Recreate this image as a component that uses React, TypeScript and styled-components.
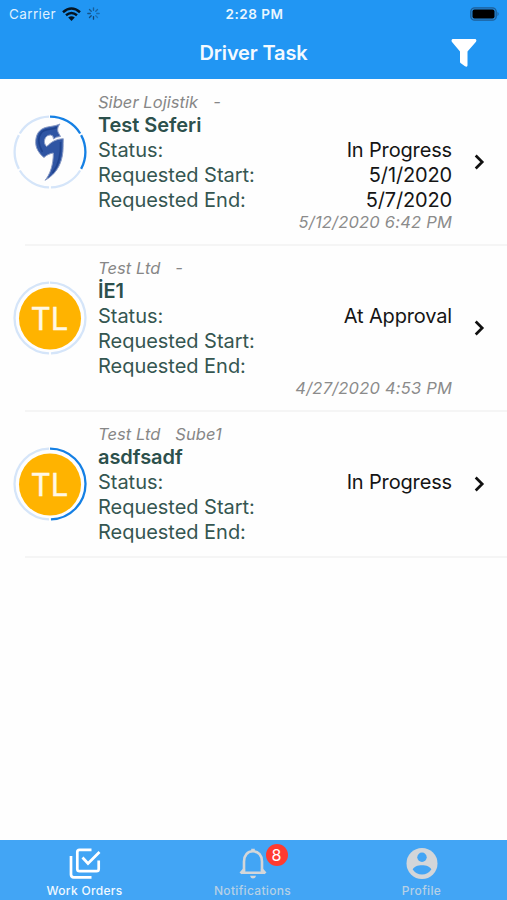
import React from "react";
import styled, { createGlobalStyle } from "styled-components";

const GlobalStyle = createGlobalStyle`
  * { box-sizing: border-box; }
  body { margin: 0; background: #fff; font-family: Inter, "Liberation Sans", sans-serif; }
`;

const Screen = styled.div`
  width: 507px;
  height: 900px;
  display: flex;
  flex-direction: column;
  overflow: hidden;
  background: #fefefe;
`;

const Header = styled.header`
  height: 79px;
  flex: none;
  background: #2196f3;
  color: #fff;
`;

const StatusBar = styled.div`
  height: 27px;
  padding: 0 7px 0 9px;
  display: grid;
  grid-template-columns: 1fr auto 1fr;
  align-items: center;
  font-size: 13.5px;
`;

const Carrier = styled.div`
  display: flex;
  align-items: center;
  gap: 6px;
  letter-spacing: 0.38px;
  color: #dff0ff;
`;

const Clock = styled.div`
  font-weight: 600;
  letter-spacing: 0.5px;
  font-size: 13.5px;
  color: #eaf6ff;
`;

const Battery = styled.svg`
  justify-self: end;
`;

const NavBar = styled.div`
  height: 52px;
  display: grid;
  grid-template-columns: 1fr auto 1fr;
  align-items: center;
  padding: 0 30px;
`;

const NavTitle = styled.h1`
  grid-column: 2;
  margin: 0;
  font-size: 20px;
  line-height: 51px;
  font-weight: 600;
  letter-spacing: -0.15px;
  color: #f4faff;
`;

const FilterIcon = styled.svg`
  justify-self: end;
`;

const List = styled.main`
  flex: 1;
`;

const Row = styled.article`
  position: relative;
  display: flex;
  padding: 13px 20px 13px 13px;

  &::after {
    content: "";
    position: absolute;
    left: 25px;
    right: 0;
    bottom: -1px;
    height: 2px;
    background: #f5f5f5;
  }
`;

const Avatar = styled.svg`
  flex: none;
  margin: 23px 11px 0 0;
`;

const Details = styled.div`
  width: 354px;
`;

const Company = styled.div`
  display: flex;
  gap: 15px;
  height: 21px;
  line-height: 20px;
  font-size: 16.5px;
  font-style: italic;
  color: #878787;
  letter-spacing: 0.05px;
`;

const TaskName = styled.h2`
  margin: 0;
  font-size: 20px;
  line-height: 25px;
  font-weight: 600;
  color: #2c504c;
  letter-spacing: -0.05px;
`;

const Field = styled.div`
  display: flex;
  justify-content: space-between;
  line-height: 25px;
  font-size: 20px;
`;

const Label = styled.span`
  color: #355651;
  letter-spacing: -0.03px;
`;

const Value = styled.span`
  color: #151515;
  letter-spacing: -0.15px;
`;

const Stamp = styled.div`
  height: 19px;
  line-height: 18px;
  font-size: 16.5px;
  letter-spacing: 0.2px;
  font-style: italic;
  text-align: right;
  color: #8b8b8b;
`;

const Spacer = styled.div`
  margin-bottom: -1px;
`;

const Chevron = styled.svg`
  margin: auto 0 auto auto;
`;

const TabBar = styled.nav`
  flex: none;
  height: 60px;
  display: grid;
  grid-template-columns: 169px 167px 171px;
  background: #42a5f5;
`;

const Tab = styled.div<{ $active?: boolean }>`
  display: flex;
  flex-direction: column;
  align-items: center;
  padding-top: 7px;
  color: ${(p) => (p.$active ? "#fff" : "#d3d6d9")};
`;

const TabIcon = styled.div`
  position: relative;
  height: 34px;

  svg { display: block; }
`;

const TabLabel = styled.span<{ $active?: boolean }>`
  font-size: 12px;
  line-height: 20px;
  font-weight: 500;
  letter-spacing: 0.32px;
  color: ${(p) => (p.$active ? "#f1f9ff" : "#b5d0e6")};
`;

const Badge = styled.span`
  position: absolute;
  left: 29px;
  top: -3px;
  width: 22px;
  height: 22px;
  border-radius: 50%;
  background: #ff3b30;
  color: #fff;
  font-size: 16px;
  line-height: 22px;
  text-align: center;
`;

type Task = {
  company: string;
  branch: string;
  name: string;
  status: string;
  start?: string;
  end?: string;
  stamp?: string;
  initials?: string;
  steps: number;
  done: number;
};

const tasks: Task[] = [
  { company: "Siber Lojistik", branch: "-", name: "Test Seferi", status: "In Progress", start: "5/1/2020", end: "5/7/2020", stamp: "5/12/2020 6:42 PM", steps: 6, done: 2 },
  { company: "Test Ltd", branch: "-", name: "İE1", status: "At Approval", stamp: "4/27/2020 4:53 PM", initials: "TL", steps: 2, done: 0 },
  { company: "Test Ltd", branch: "Sube1", name: "asdfsadf", status: "In Progress", initials: "TL", steps: 2, done: 1 },
];

const arc = (from: number, to: number, r: number) => {
  const point = (deg: number) => {
    const a = ((deg - 90) * Math.PI) / 180;
    return `${(37 + r * Math.cos(a)).toFixed(2)} ${(37 + r * Math.sin(a)).toFixed(2)}`;
  };
  return `M${point(from)}A${r} ${r} 0 0 1 ${point(to)}`;
};

const Swoosh = () => (
  <>
    <path
      d="M47 9C44.500 11.500 44.300 14.500 45 17L47.500 21.500Q43 21.500 40.500 24Q40.500 20 37.500 20C33 20 31 24 31.500 28Q32 30.500 33.800 31.500C38 27 43 24 50.300 23.700C50 30 50.500 35 49.300 41C47.500 51 42 60 32 65.300C37 60 40.500 49 40.300 38C37 38.500 33.500 40 31 42.500C28 40.500 25 36.500 23.700 33C21.800 28 22.500 20 26.500 16C32 10.500 39 12.500 47 9Z"
      fill="#2f55a3"
      stroke="#8c9dc6"
      strokeWidth="1"
      strokeLinejoin="round"
    />
    <path d="M44 12.500C38 15 32 13.500 28.500 17.500C24.500 22.500 25.500 30 29.500 37M47.500 27C48 38 46.500 49 39.500 58" fill="none" stroke="#1f438e" strokeWidth="1.600" />
  </>
);

const ProgressAvatar = ({ task }: { task: Task }) => (
  <Avatar width="74" height="74" viewBox="0 0 74 74">
    {Array.from({ length: task.steps }, (_, i) => (
      <path
        key={i}
        d={arc((i * 360) / task.steps + (i === 0 ? 0 : 1.5), ((i + 1) * 360) / task.steps - 1.5, 35.4)}
        fill="none"
        stroke={i < task.done ? "#1580e4" : "#d5e5f9"}
        strokeWidth="2.3"
      />
    ))}
    {task.initials ? (
      <>
        <circle cx="37" cy="37.500" r="31" fill="#ffb300" />
        <text x="36.500" y="49" fontSize="31" textAnchor="middle" fill="#fff8e6" stroke="#fff8e6" strokeWidth=".4">{task.initials}</text>
      </>
    ) : (
      <Swoosh />
    )}
  </Avatar>
);

const TaskRow = ({ task }: { task: Task }) => (
  <Row>
    <ProgressAvatar task={task} />
    <Details>
      <Company><span>{task.company}</span><span>{task.branch}</span></Company>
      <TaskName>{task.name}</TaskName>
      <Field><Label>Status:</Label><Value>{task.status}</Value></Field>
      <Field><Label>Requested Start:</Label><Value>{task.start}</Value></Field>
      <Field><Label>Requested End:</Label><Value>{task.end}</Value></Field>
      {task.stamp ? <Stamp>{task.stamp}</Stamp> : <Spacer />}
    </Details>
    <Chevron width="14" height="18" viewBox="0 0 14 18" fill="none" stroke="#111" strokeWidth="2.700">
      <path d="M2.700 2.500 9.200 9l-6.500 6.500" />
    </Chevron>
  </Row>
);

export default function App() {
  return (
    <Screen>
      <GlobalStyle />
      <Header>
        <StatusBar>
          <Carrier>
            <span>Carrier</span>
            <svg width="19" height="14" viewBox="0 0 19 14" fill="none" stroke="#051522" strokeWidth="2.500">
              <path d="M1 5.200Q9.500-2.200 18 5.200M4 8.300Q9.500 3.800 15 8.300" />
              <path d="M6.200 10.600Q9.500 8 12.800 10.600L9.500 14Z" fill="#051522" stroke="none" />
            </svg>
            <svg width="13" height="13" viewBox="0 0 13 13" strokeWidth="1.300" strokeLinecap="round">
              {Array.from({ length: 8 }, (_, i) => (
                <path key={i} d="M6.500 .8V3.300" transform={`rotate(${i * 45} 6.500 6.500)`} stroke="#123e66" opacity={0.9 - ((i + 4) % 8) * 0.07} />
              ))}
            </svg>
          </Carrier>
          <Clock>2:28 PM</Clock>
          <Battery width="30" height="14" viewBox="0 0 30 14">
            <rect x=".8" y=".8" width="25.400" height="12.400" rx="3.800" fill="#2489db" stroke="#1d5f99" strokeWidth="1.300" />
            <rect x="2.500" y="2.500" width="22" height="9" rx="2" fill="#000" />
            <path d="M27.500 4.800q2.300 2.200 0 4.400z" fill="#1d5f99" />
          </Battery>
        </StatusBar>
        <NavBar>
          <NavTitle>Driver Task</NavTitle>
          <FilterIcon width="26" height="28" viewBox="0 0 26 28" fill="#fff">
            <path d="M1.500 0H24.500Q26 1 25 2.700L16.500 12.500V26.500Q16 28.500 14 27.300L9.500 24Q9 23.500 9 22.500V12.500L.8 2.700Q0 .8 1.500 0Z" />
          </FilterIcon>
        </NavBar>
      </Header>
      <List>
        {tasks.map((task) => <TaskRow key={task.name} task={task} />)}
      </List>
      <TabBar>
        <Tab $active>
          <TabIcon>
            <svg width="32" height="32" viewBox="0 0 32 32" fill="none" stroke="currentColor" strokeWidth="2.700">
              <path d="M22.500 2.800H10.500Q8.300 2.800 8.300 5V22Q8.300 24.200 10.500 24.200H27.500Q29.700 24.200 29.700 22V13.500" />
              <path d="M2 9V27.500Q2 30.300 4.800 30.300H22.500" />
              <path d="M13.500 10.500 19 16.500 30.500 5" />
            </svg>
          </TabIcon>
          <TabLabel $active>Work Orders</TabLabel>
        </Tab>
        <Tab>
          <TabIcon>
            <svg width="32" height="32" viewBox="0 0 32 32" fill="none" stroke="currentColor" strokeWidth="2.600">
              <path d="M4 25.800H28M7 25.500V14.500C7 8.500 10.500 4.300 16 4.300S25 8.500 25 14.500V25.500" />
              <path d="M3.500 26.300 7.500 22M28.500 26.300 24.500 22" />
              <path d="M14.200 1.800h3.600v3h-3.600zM13 28.700h6q-.6 2.700-3 2.700t-3-2.700z" fill="currentColor" stroke="none" />
            </svg>
            <Badge>8</Badge>
          </TabIcon>
          <TabLabel>Notifications</TabLabel>
        </Tab>
        <Tab>
          <TabIcon>
            <svg width="32" height="32" viewBox="0 0 32 32">
              <circle cx="16" cy="16.500" r="15.500" fill="currentColor" />
              <circle cx="16" cy="10.200" r="4.700" fill="#42a5f5" />
              <path d="M6.700 22.500C8.500 16.800 23.500 16.800 25.300 22.500Q21.800 27.500 16 27.500T6.700 22.500Z" fill="#42a5f5" />
            </svg>
          </TabIcon>
          <TabLabel>Profile</TabLabel>
        </Tab>
      </TabBar>
    </Screen>
  );
}
